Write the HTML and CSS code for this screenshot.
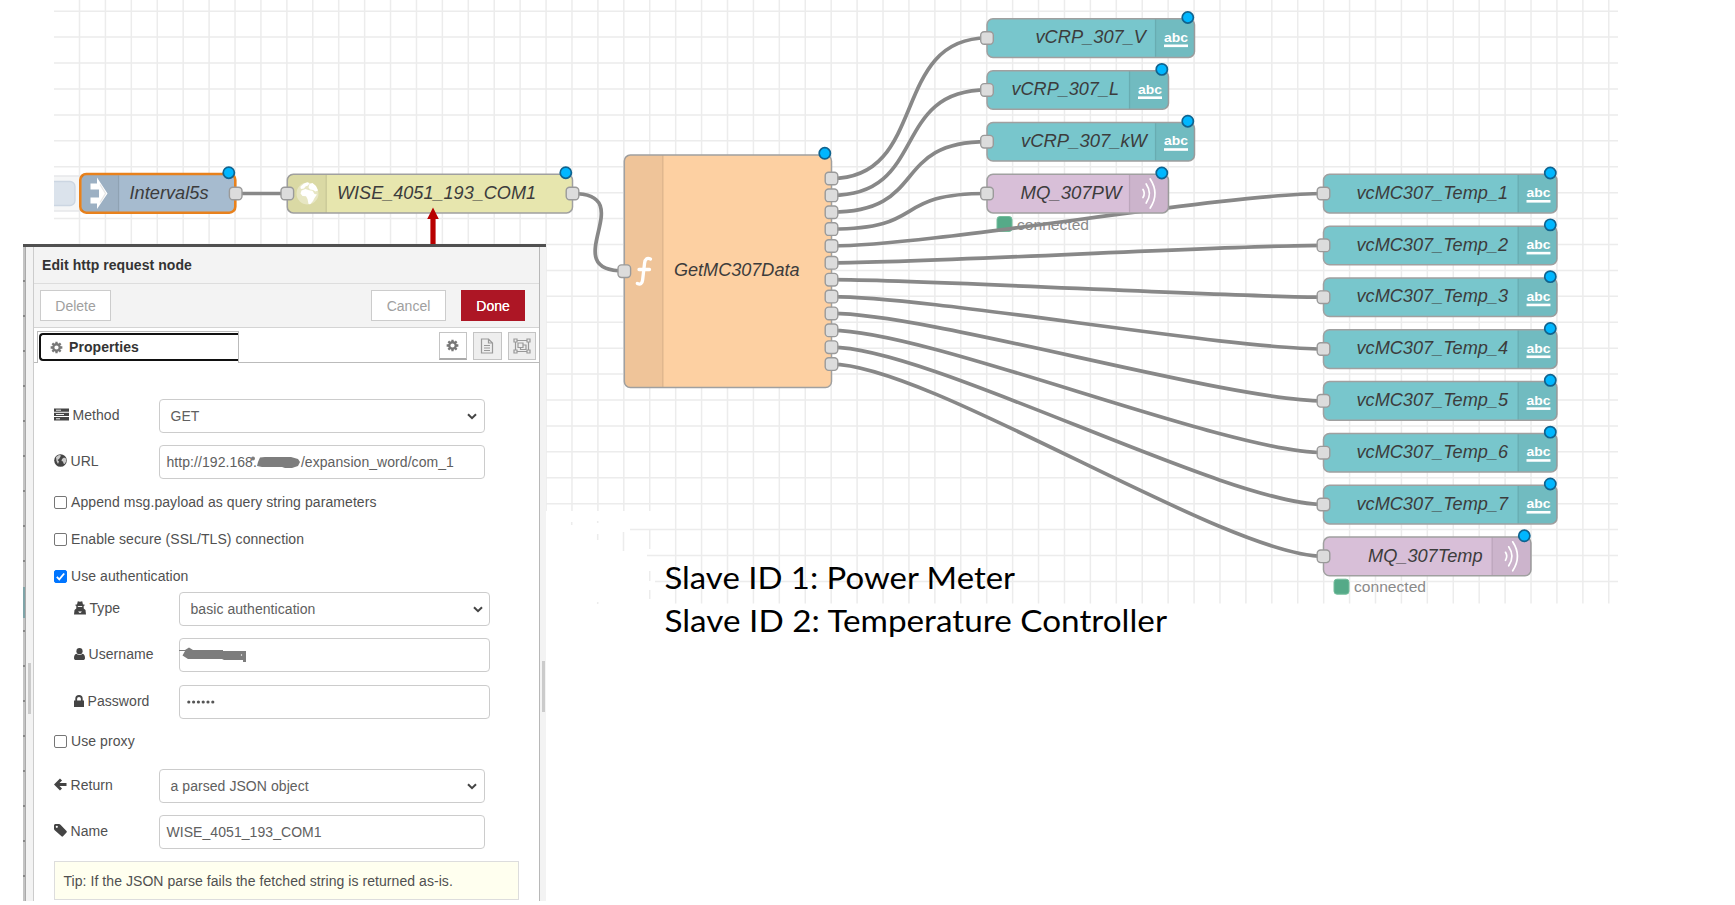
FILE: index.html
```
<!DOCTYPE html>
<html lang="en">
<head>
<meta charset="utf-8">
<title>Edit http request node</title>
<link rel="stylesheet" href="styles.css">
</head>
<body>
<svg class="flow" width="1735" height="905" viewBox="0 0 1735 905">
  <g id="grid" class="grid"></g>
  <g id="status"></g>
  <g id="wires" class="wires"></g>
  <g>
    <rect class="inject-shell" x="44" y="176" width="40" height="35" rx="5"/>
    <rect class="inject-button" x="46" y="181.500" width="29" height="24" rx="5"/>
    <rect class="inject-crop" x="36" y="170" width="18" height="46"/>
  </g>
  <g id="nodes"></g>
  <g class="arrow">
    <path d="M433 207.500L438.800 219H435.600V245H430.400V219H427.200Z"/>
  </g>
  <g class="caption">
    <text x="664.500" y="588.500" textLength="350.500" lengthAdjust="spacingAndGlyphs">Slave ID 1: Power Meter</text>
    <text x="664.500" y="631.500" textLength="502.500" lengthAdjust="spacingAndGlyphs">Slave ID 2: Temperature Controller</text>
  </g>
</svg>

<div class="dialog">
  <div class="edge"><i></i></div>
  <div class="gutter gutter-left"><i></i></div>
  <section class="panel">
    <header class="title">Edit http request node</header>
    <div class="toolbar">
      <button class="btn">Delete</button>
      <span class="grow"></span>
      <button class="btn cancel">Cancel</button>
      <button class="btn done">Done</button>
    </div>
    <div class="tabs">
      <div class="tab"><div class="tab-inner">
        <svg class="gear" viewBox="0 0 16 16"><circle cx="8" cy="8" r="4"/><path d="M8 .8V4M8 12v3.200M.8 8H4M12 8h3.200M2.900 2.900l2.300 2.300M10.800 10.800l2.300 2.300M13.100 2.900l-2.300 2.300M5.200 10.800l-2.300 2.300"/></svg>
        <b>Properties</b></div></div>
      <div class="tab-tools">
        <span class="tool active"><svg class="gear" viewBox="0 0 16 16"><circle cx="8" cy="8" r="4"/><path d="M8 .8V4M8 12v3.200M.8 8H4M12 8h3.200M2.900 2.900l2.300 2.300M10.800 10.800l2.300 2.300M13.100 2.900l-2.300 2.300M5.200 10.800l-2.300 2.300"/></svg></span>
        <span class="tool"><svg width="14" height="16" viewBox="0 0 14 16" class="line"><path d="M1.500 1h7l4 4v10h-11zM8.500 1v4h4M4 7.500h6M4 10h6M4 12.500h6"/></svg></span>
        <span class="tool"><svg width="18" height="16" viewBox="0 0 18 16" class="line"><path d="M2.500 2.500h13v11h-13zM5 5h5v4.500H5zM10 7h3v4.500H7.500v-2"/><path class="knob" d="M1 1h3v3H1zM14 1h3v3h-3zM1 12h3v3H1zM14 12h3v3h-3z"/></svg></span>
      </div>
    </div>
    <div class="form">
      <div class="row first">
        <label><svg width="15" height="13" viewBox="0 0 15 13"><path d="M0 .5h15v3.300H0zM0 4.800h15v3.300H0zM0 9.100h15v3.300H0z"/><path class="cut" d="M2 2.200h5M2 6.500h8M2 10.800h4"/></svg>Method</label>
        <div class="field select"><span>GET</span><svg width="10" height="7" viewBox="0 0 10 7"><path d="M1 1.200l4 4 4-4"/></svg></div>
      </div>
      <div class="row url">
        <label><svg width="13" height="13" viewBox="0 0 13 13"><circle cx="6.500" cy="6.500" r="6.300"/><path class="land" d="M2 3l3-2 2 .5-1 2-1 1.500-1.500 1L5 7.500 4 10 2.500 7zM8 5l2-1.500 2 1 .3 2.500-1.500 3-1.300-.5-.5-2L7.500 7z"/></svg>URL</label>
        <div class="field"><span class="pre">http://192.168.</span><svg class="mask" width="46" height="13" viewBox="0 0 46 13"><circle cx="-3" cy="2.500" r="2"/><path d="M4 1.500L9 1h26l7 2 2 3-2 4-6 2h-7l-3-1H6l-5-1 1-4z"/></svg><span class="post">/expansion_word/com_1</span></div>
      </div>
      <div class="check append"><i class="box"></i>Append msg.payload as query string parameters</div>
      <div class="check"><i class="box"></i>Enable secure (SSL/TLS) connection</div>
      <div class="check"><i class="box on"><svg width="11" height="11" viewBox="0 0 11 11"><path d="M1.800 5.800l2.500 2.600L9.200 2.500"/></svg></i>Use authentication</div>
      <div class="row sub type">
        <label><svg width="12" height="14" viewBox="0 0 12 14"><path d="M3.800 .3l2.200.5 2.200-.5.8 3.200h1.500v1.300H9.700V7.500L11.500 9l.5 4.500H0L.5 9l1.800-1.500V4.800h-.8V3.500H3z"/><path class="cut" d="M3.800 5.500h4.400M5 10l.5 2M7 10l-.5 2"/></svg>Type</label>
        <div class="field select"><span>basic authentication</span><svg width="10" height="7" viewBox="0 0 10 7"><path d="M1 1.200l4 4 4-4"/></svg></div>
      </div>
      <div class="row sub">
        <label><svg width="11" height="12" viewBox="0 0 11 12"><circle cx="5.500" cy="3.200" r="3.100"/><path d="M2.500 5.700c1.700 1.700 4.300 1.700 6 0C10.300 6.200 11 8 11 10c0 1.500-.8 2-2 2H2c-1.200 0-2-.5-2-2 0-2 .7-3.800 2.500-4.300z"/></svg>Username</label>
        <div class="field user"><svg class="mask" width="67" height="14" viewBox="0 0 67 14"><path d="M0 2h6l4-2.500L14 2h30v1h23v11h-3v-2H45l-2-1H9L3.500 7.500 6 3H0z"/><circle class="hole" cx="62.500" cy="7" r=".7"/></svg></div>
      </div>
      <div class="row sub pass">
        <label><svg width="10" height="12" viewBox="0 0 10 12"><path d="M0 5.500h10V12H0z"/><path class="shackle" d="M2.200 6V3.800a2.800 2.800 0 0 1 5.600 0V6"/></svg>Password</label>
        <div class="field"><svg width="28" height="4" viewBox="0 0 28 4"><circle cx="1.800" cy="2" r="1.600"/><circle cx="6.600" cy="2" r="1.600"/><circle cx="11.400" cy="2" r="1.600"/><circle cx="16.200" cy="2" r="1.600"/><circle cx="21" cy="2" r="1.600"/><circle cx="25.800" cy="2" r="1.600"/></svg></div>
      </div>
      <div class="check proxy"><i class="box"></i>Use proxy</div>
      <div class="row return">
        <label><svg width="13" height="13" viewBox="0 0 13 13"><path class="back" d="M12.500 6.500H2.500M7 1.500L2 6.500l5 5"/></svg>Return</label>
        <div class="field select"><span>a parsed JSON object</span><svg width="10" height="7" viewBox="0 0 10 7"><path d="M1 1.200l4 4 4-4"/></svg></div>
      </div>
      <div class="row name">
        <label><svg width="13" height="13" viewBox="0 0 13 13"><path d="M0 1.500C0 .7.700 0 1.500 0H5c.6 0 1 .2 1.500.7L12.500 7c.5.500.5 1 0 1.500L9 12.300c-.5.500-1 .5-1.500 0L.7 6.300C.2 5.800 0 5.400 0 4.800z"/><circle class="hole" cx="2.800" cy="2.800" r="1.100"/></svg>Name</label>
        <div class="field">WISE_4051_193_COM1</div>
      </div>
      <div class="tip">Tip: If the JSON parse fails the fetched string is returned as-is.</div>
    </div>
  </section>
  <div class="gutter gutter-right"><i></i></div>
</div>
<script src="flow.js"></script>
</body>
</html>
```
FILE: styles.css
```
* { box-sizing: border-box; }
body { margin: 0; width: 1735px; height: 905px; overflow: hidden; background: #fff; position: relative;
  font: 14px/20px "Liberation Sans", Arial, sans-serif; color: #505050; }
.flow { display: block; font-family: "Liberation Sans", Arial, sans-serif; }
.grid path { stroke: #ececec; stroke-width: 1.500; fill: none; }
.wires path { stroke: #888; stroke-width: 3.700; fill: none; }
.node-body { stroke: #a0a0a0; stroke-width: 1.500; }
.node-body.selected { stroke: #e8811c; stroke-width: 2.600; }
.shade { fill: #000; fill-opacity: .055; }
.divider { stroke: #000; stroke-opacity: .1; stroke-width: 1.300; }
.port { fill: #dcdcdc; stroke: #9a9a9a; stroke-width: 1.400; }
.dot { fill: #00b7ff; stroke: #0f638f; stroke-width: 1.700; }
.node-label { font-size: 18.600px; font-style: italic; fill: #3c3c3c; }
.abc { font-size: 13.500px; font-weight: bold; fill: #fff; }
.abc-line, .glyph { fill: #fff; }
.waves, .func { fill: none; stroke: #fff; stroke-width: 1.700; stroke-linecap: round; }
.func { stroke-width: 3.300; }
.globe { fill: #fff; fill-opacity: .35; }
.status-box { fill: #5a8; stroke: #74bd9c; stroke-width: 1; }
.status-text { font-size: 15.500px; fill: #8a8a8a; }
.inject-shell { fill: #f5f6f7; stroke: #e6e8ea; stroke-width: 1.500; }
.inject-button { fill: #dbe3ec; stroke: #ccd6e2; stroke-width: 1.300; }
.inject-crop { fill: #fff; }
.arrow path { fill: #b80000; }
.caption text { font: 31px Lato, sans-serif; fill: #000; }

.dialog { position: absolute; left: 23px; top: 244px; width: 523px; height: 657px; display: flex; border-top: 3px solid #505050; background: #fff; }
.edge { width: 3px; background: repeating-linear-gradient(#c4c4c4 0 33px, #888 33px 35px); border-right: 1px solid #aaa; padding-top: 340px; }
.edge i { display: block; height: 31px; background: #7fa4a8; }
.gutter { width: 7px; background: #f3f3f3; display: flex; justify-content: center; }
.gutter i { display: block; width: 3px; height: 51px; background: #cbcbcb; margin-top: 416px; }
.gutter-right { width: 6px; }
.gutter-right i { margin-top: 414px; }
.panel { width: 507px; border-left: 1px solid #ccc; border-right: 1px solid #b8b8b8; letter-spacing: .06px; }
.title { height: 37px; padding: 8px; background: #f3f3f3; border-bottom: 1px solid #ddd; font-weight: bold; color: #333; line-height: 20px; }
.toolbar { height: 44px; display: flex; align-items: center; padding: 0 14px 0 6px; background: #f3f3f3; border-bottom: 1px solid #d4d4d4; }
.btn { width: 71px; height: 31px; border: 1px solid #ccc; background: #fff; color: #a0a0a0; font: 14px "Liberation Sans", Arial, sans-serif; padding: 0; }
.grow { flex: 1; }
.cancel { width: 75px; margin-right: 15px; }
.done { width: 64px; background: #ad1625; border-color: #ad1625; color: #fff; text-shadow: 0 0 .6px #fff; }
.tabs { height: 35px; display: flex; justify-content: space-between; border-bottom: 1px solid #bbb; padding: 3px 3px 0 3px; }
.tab { width: 202px; height: 32px; border: 1px solid #bbb; border-bottom: 0; background: #fff; padding: 1px 0 0 1px; }
.tab-inner { height: 28px; border: 2px solid #111; border-right: 0; border-radius: 4px 0 0 4px; display: flex; align-items: center; gap: 6px; padding-left: 9px; color: #333; line-height: 18px; }
.tab-inner b { padding-bottom: 1px; }
.tab-tools { display: flex; gap: 6px; padding-top: 1px; }
.tool { width: 28.500px; height: 28px; border: 1px solid #c4c4c4; background: #eee; display: flex; align-items: center; justify-content: center; }
.tool.active { background: #fff; border-bottom: 2px solid #aaa; }
.gear { width: 13px; height: 13px; fill: none; stroke: #777; stroke-width: 2.800; }
.line { fill: none; stroke: #999; stroke-width: 1.200; }
.line .knob { fill: #eee; }
.form { padding: 0 20px; }
.row { display: flex; height: 34px; margin-top: 12px; }
.row.first { margin-top: 36px; }
.row label { width: 105px; display: flex; align-items: center; gap: 3.500px; height: 31px; }
.row label svg { fill: #444; }
.row.sub { padding-left: 20px; }
.row.sub label { width: 105px; height: 32px; }
.cut { fill: none; stroke: #fff; stroke-width: .9; }
.land { fill: #ccc; }
.hole { fill: #fff; }
.shackle { fill: none; stroke: #444; stroke-width: 1.800; }
.back { fill: none; stroke: #444; stroke-width: 2.900; }
.field { width: 325.500px; border: 1px solid #ccc; border-radius: 4px; padding: 0 6.500px; display: flex; align-items: center; color: #606060; white-space: nowrap; }
.sub .field { width: 311px; }
.select { justify-content: space-between; padding: 0 6.500px 0 10.500px; }
.select svg { fill: none; stroke: #444; stroke-width: 2; }
.mask { fill: #7d7d7d; margin: 0 -1px; overflow: visible; }
.user { padding: 0; }
.pass { margin-top: 13px; }
.pass .field svg { fill: #555; }
.type { margin-top: 4px; }
.check { display: flex; align-items: center; gap: 4px; height: 24px; margin-top: 13px; letter-spacing: .08px; }
.check.append { margin-top: 11px; }
.check.proxy { margin-top: 10px; }
.box { width: 13px; height: 13px; border: 1px solid #767676; border-radius: 2px; background: #fff; }
.box.on { background: #0075ff; border-color: #0075ff; display: flex; }
.box svg { fill: none; stroke: #fff; stroke-width: 1.800; }
.return { margin-top: 16px; }
.tip { height: 39px; margin-top: 12px; border: 1px solid #ddd; background: #ffffef; padding: 9px 8.500px; color: #505050; white-space: nowrap; }
```
FILE: flow.js
```
const STEP = 25.92;
const byId = id => document.getElementById(id);

/* Background grid, with the faded lower-left corner */
let grid = "";
for (let i = 0; i < 23; i++) {
  const y = 11.2 + i * STEP;
  const x0 = y < 511 ? 54 : y < 540 ? 630 : y < 560 ? 647 : 655;
  grid += `M${x0} ${y}H1618`;
}
for (let i = 0; i < 60; i++) {
  const x = 79.5 + i * STEP;
  if (x < 640) grid += `M${x} 0V511`;
  else if (x < 660) grid += `M${x} 0V511M${x} 530V549M${x} 571V581M${x} 590V599`;
  else grid += `M${x} 0V603.500`;
}
grid += "M571.700 522V525M597.700 521V523M597.700 534V540M623.500 532V551M597.700 602V604";
byId("grid").innerHTML = `<path d="${grid}"/>`;

/* Wires */
const wire = (x1, y1, x2, y2, c = 97.2) =>
  `<path d="M${x1} ${y1}C${x1 + c} ${y1} ${x2 - c} ${y2} ${x2} ${y2}"/>`;
const outY = i => 178.5 + i * 16.87;
const rowY = i => 193.5 + i * 51.83;
const inY = [38, 89.900, 141.700, 193.500];
let wires = wire(236, 193.500, 287, 193.500, 20) + wire(572.500, 193.500, 624, 271, 69.800);
for (let i = 0; i < 12; i++)
  wires += i < 4 ? wire(831.500, outY(i), 987, inY[i]) : wire(831.500, outY(i), 1323.500, rowY(i - 4));
byId("wires").innerHTML = wires;

/* Nodes */
const port = (x, y) => `<rect class="port" x="${x - 6.3}" y="${y - 6.3}" width="12.600" height="12.600" rx="3.500"/>`;
const dot = (x, y) => `<circle class="dot" cx="${x}" cy="${y}" r="5.600"/>`;
const label = (s, x, y, w) => `<text class="node-label" x="${x}" y="${y}" textLength="${w}" lengthAdjust="spacingAndGlyphs">${s}</text>`;
const body = (x, y, w, h, fill, cls = "") => `<rect class="node-body ${cls}" x="${x}" y="${y}" width="${w}" height="${h}" rx="6" fill="${fill}"/>`;

function outNode(name, cy, x, right, textX, textEnd, kind) {
  const sep = right - 39, mid = sep + 20;
  let s = body(x, cy - 19.200, right - x, 38.600, kind === "mq" ? "#d8bfd8" : "#78c6cc");
  s += `<path class="shade" d="M${sep} ${cy - 18.500}H${right - 5}a5 5 0 0 1 5 5V${cy + 13.700}a5 5 0 0 1-5 5H${sep}z"/><path class="divider" d="M${sep} ${cy - 18.500}v37.200"/>`;
  if (kind === "mq") {
    s += `<path class="waves" d="M${mid - 6.500} ${cy - 4}q2.500 4 0 8M${mid - 3.300} ${cy - 9.500}q6.500 9.500 0 19M${mid + .7} ${cy - 14.500}q9.500 14.500 0 29"/>`;
  } else {
    s += `<text class="abc" x="${mid - 11.500}" y="${cy + 3.700}" textLength="24" lengthAdjust="spacingAndGlyphs">abc</text><rect class="abc-line" x="${mid - 11.500}" y="${cy + 6.500}" width="24" height="2.600"/>`;
  }
  return s + label(name, textX, cy + 5.200, textEnd - textX) + port(x, cy) + dot(right - 6.700, cy - 20.500);
}

let nodes = body(80.300, 174, 155, 38.700, "#a6bbcf", "selected")
  + `<path class="shade" d="M82 175.300h36.600v36.100H82z"/><path class="divider" d="M118.600 175.500v36"/>`
  + `<path class="glyph" d="M90.500 183.500h6.500V177.500L107.500 193.500 97 209V203.500H90.500V197.500h8.500V189.500h-8.500z"/>`
  + `<path class="divider" d="M100 184.500l5.500 9-5.500 9" fill="none"/>`
  + label("Interval5s", 129.500, 198.500, 79) + port(235.700, 193.500) + dot(228.800, 172.700);

nodes += body(287.300, 174.300, 285.200, 38.600, "#e7e6ae")
  + `<path class="shade" d="M292 175h34.300v37.200H292a4 4 0 0 1-4-4V179a4 4 0 0 1 4-4z"/><path class="divider" d="M326.300 175v37.200"/>`
  + `<circle class="globe" cx="307.500" cy="193.500" r="11"/><path class="glyph" d="M300.500 186.500l3.500-3 3.500-1.200 2 1-1.500 2.200-2.500 1-1.500 2-2.500.5-1-.8zM309.500 184l3-1 3.500 3 2 4.500-2.500 1-2.500-1.500-3-.5-1.500-2zM301.500 190.500l4-1.500 3.500 1.200 3.500.6 2 3.200 2.500.5-2.500 3.500-1.500 3-2.800 3.300-1.700-.4-1-5-1.500-2.600-3.500-.3-2-2.500z"/>`
  + label("WISE_4051_193_COM1", 337, 198.500, 199) + port(287.300, 193.500) + port(572.500, 193.500) + dot(565.800, 172.700);

nodes += body(624.300, 155, 207.200, 232.500, "#fdd0a2")
  + `<path class="shade" d="M629 155.700h34v231h-34a4 4 0 0 1-4-4v-223a4 4 0 0 1 4-4z"/><path class="divider" d="M663 155.700v231"/>`
  + `<path class="func" d="M650.500 259Q645.500 256.700 644.600 263L642.600 280Q642 285.500 637.300 283.500M639 269.500H649.500"/>`
  + label("GetMC307Data", 674, 276, 125.500) + port(624.300, 271.200) + dot(824.800, 153.300);
for (let i = 0; i < 12; i++) nodes += port(831.500, outY(i));

nodes += outNode("vCRP_307_V", 38, 987, 1194.500, 1035.500, 1146)
  + outNode("vCRP_307_L", 89.900, 987, 1168.500, 1011.500, 1119)
  + outNode("vCRP_307_kW", 141.700, 987, 1194.500, 1021, 1147)
  + outNode("MQ_307PW", 193.500, 987, 1168.500, 1020.500, 1121.500, "mq");
for (let i = 0; i < 7; i++) nodes += outNode("vcMC307_Temp_" + (i + 1), rowY(i), 1323.500, 1557, 1356.500, 1508);
nodes += outNode("MQ_307Temp", rowY(7), 1323.500, 1531, 1368, 1482.500, "mq");
byId("nodes").innerHTML = nodes;

/* Connection status */
byId("status").innerHTML = [[997, 216.500], [1334, 579.200]].map(([x, y]) =>
  `<rect class="status-box" x="${x}" y="${y}" width="15" height="15" rx="3"/><text class="status-text" x="${x + 20}" y="${y + 13}" textLength="72" lengthAdjust="spacingAndGlyphs">connected</text>`).join("");
```
